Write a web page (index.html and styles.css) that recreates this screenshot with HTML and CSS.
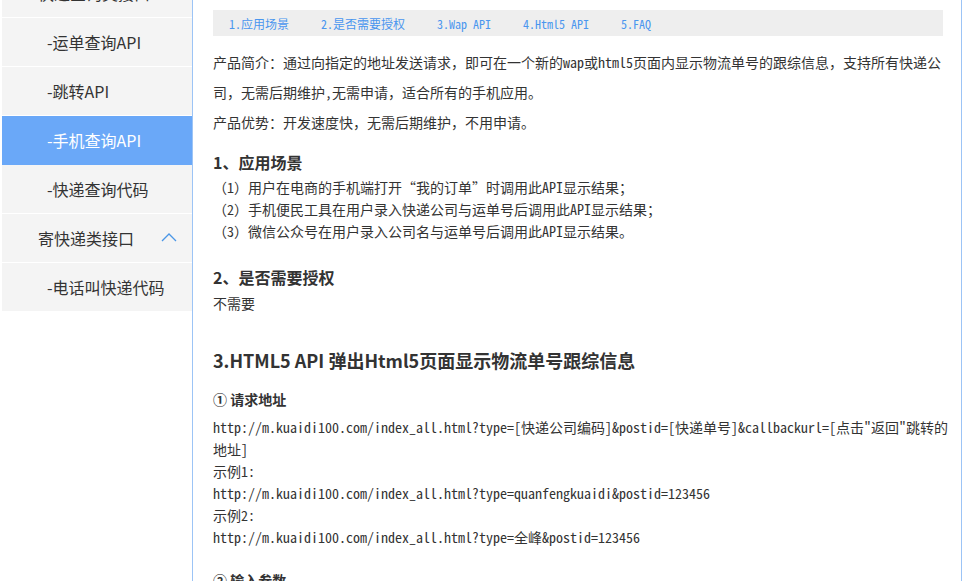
FILE: index.html
```html
<!DOCTYPE html>
<html lang="zh-CN">
<head>
<meta charset="utf-8">
<title>手机查询API</title>
<link rel="stylesheet" href="styles.css">
</head>
<body>
<div class="page">
  <aside class="sidebar">
    <div class="nav-item parent">快递查询类接口<svg class="chev" width="16" height="9" viewBox="0 0 16 9"><polyline points="1,8 8,1 15,8" fill="none" stroke="#4a96e6" stroke-width="1.3"/></svg></div>
    <div class="nav-item child">-运单查询API</div>
    <div class="nav-item child">-跳转API</div>
    <div class="nav-item child active">-手机查询API</div>
    <div class="nav-item child">-快递查询代码</div>
    <div class="nav-item parent">寄快递类接口<svg class="chev" width="16" height="9" viewBox="0 0 16 9"><polyline points="1,8 8,1 15,8" fill="none" stroke="#4a96e6" stroke-width="1.3"/></svg></div>
    <div class="nav-item child">-电话叫快递代码</div>
  </aside>
  <main class="content">
    <nav class="tabs">
      <a href="#s1">1.应用场景</a>
      <a href="#s2">2.是否需要授权</a>
      <a href="#s3">3.Wap API</a>
      <a href="#s4">4.Html5 API</a>
      <a href="#s5">5.FAQ</a>
    </nav>
    <div class="doc">
      <p class="intro">产品简介：通过向指定的地址发送请求，即可在一个新的wap或html5页面内显示物流单号的跟综信息，支持所有快递公司，无需后期维护,无需申请，适合所有的手机应用。</p>
      <p class="intro">产品优势：开发速度快，无需后期维护，不用申请。</p>

      <h3 class="h-sec first" id="s1">1、应用场景</h3>
      <div class="lines">
        <div>（1）用户在电商的手机端打开“我的订单”时调用此API显示结果；</div>
        <div>（2）手机便民工具在用户录入快递公司与运单号后调用此API显示结果；</div>
        <div>（3）微信公众号在用户录入公司名与运单号后调用此API显示结果。</div>
      </div>

      <h3 class="h-sec second" id="s2">2、是否需要授权</h3>
      <div class="lines">不需要</div>

      <h2 class="h-big" id="s4">3.HTML5 API 弹出Html5页面显示物流单号跟综信息</h2>

      <h4 class="h-sub first-sub">① 请求地址</h4>
      <div class="lines code">
        <div>http://m.kuaidi100.com/index_all.html?type=[快递公司编码]&amp;postid=[快递单号]&amp;callbackurl=[点击"返回"跳转的地址]</div>
        <div>示例1:</div>
        <div>http://m.kuaidi100.com/index_all.html?type=quanfengkuaidi&amp;postid=123456</div>
        <div>示例2:</div>
        <div>http://m.kuaidi100.com/index_all.html?type=全峰&amp;postid=123456</div>
      </div>

      <h4 class="h-sub next-sub">② 输入参数</h4>
    </div>
  </main>
</div>
</body>
</html>
```

FILE: styles.css
```css
html, body {
  margin: 0;
  padding: 0;
  height: 100%;
  overflow: hidden;
  background: #fff;
}

.page {
  display: flex;
  align-items: stretch;
  height: 581px;
}

/* ---------- sidebar ---------- */
.sidebar {
  width: 190px;
  margin-left: 2px;
  margin-top: -31px;
  align-self: flex-start;
}

.nav-item {
  height: 48px;
  border-bottom: 1px solid #fff;
  background: #f4f4f4;
  display: flex;
  align-items: center;
  font-family: "Noto Sans CJK SC", "Noto Sans", sans-serif;
  font-size: 16px;
  color: #333;
  white-space: nowrap;
}

.nav-item.parent {
  padding-left: 36px;
}

.nav-item.child {
  padding-left: 45px;
}

.nav-item.active {
  background: #6aa8f8;
  border-bottom-color: #6aa8f8;
  color: #fff;
}

.chev {
  margin-left: auto;
  margin-right: 15px;
  margin-top: -2px;
}

/* ---------- content ---------- */
.content {
  width: 738px;
  border-left: 1px solid #9cc4f6;
  border-right: 1px solid #9cc4f6;
  padding: 10px 10px 0 20px;
  color: #333;
  font-family: "Noto Sans Mono CJK SC", "Noto Sans CJK SC", monospace;
  font-size: 14px;
}

.tabs {
  width: 730px;
  height: 26px;
  background: #eeeeee;
  display: flex;
  align-items: center;
  margin-bottom: 11px;
}

.tabs a {
  padding: 0 16px;
  font-family: "Noto Sans Mono CJK SC", "Noto Sans CJK SC", monospace;
  font-size: 12px;
  color: #4a96ee;
  text-decoration: none;
  white-space: nowrap;
}

.doc {
  display: flex;
  flex-direction: column;
}

.intro {
  margin: 0;
  line-height: 30px;
}

.h-sec {
  margin: 0;
  font-family: "Noto Sans CJK SC", sans-serif;
  font-size: 16px;
  font-weight: bold;
  line-height: 26px;
  color: #333;
}

.h-sec.first {
  margin-top: 12px;
  margin-bottom: 1px;
}

.h-sec.second {
  margin-top: 22px;
  margin-bottom: 2px;
}

.lines {
  line-height: 22px;
}

.code {
  margin-top: 6px;
}

.h-big {
  margin: 32px 0 0;
  font-family: "Noto Sans CJK SC", sans-serif;
  font-size: 18px;
  font-weight: bold;
  line-height: 28px;
  color: #333;
}

.h-sub {
  margin: 0;
  font-family: "Noto Sans CJK SC", sans-serif;
  font-size: 14px;
  font-weight: bold;
  line-height: 22px;
  color: #333;
}

.h-sub.first-sub {
  margin-top: 14px;
}

.h-sub.next-sub {
  margin-top: 21px;
}
```
